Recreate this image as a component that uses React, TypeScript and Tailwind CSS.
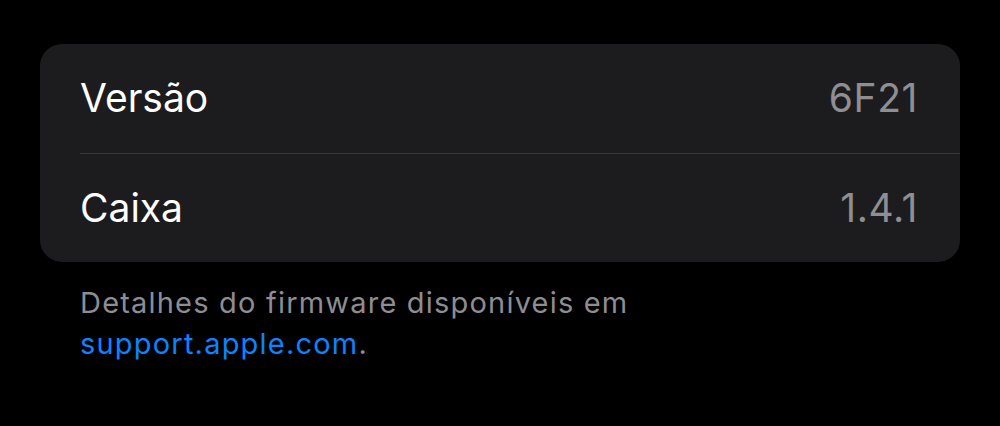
export default function App() {
  return (
    <div className="w-[1000px] h-[426px] bg-black pt-[44px] px-[40px] font-['Inter','Noto_Sans',sans-serif] antialiased">
      <div className="rounded-[22px] bg-[#1c1c1e] overflow-hidden">
        <div className="flex items-center justify-between h-[109px] pl-[40px] pr-[42px]">
          <span className="text-[39px] text-white">Versão</span>
          <span className="text-[39px] text-[#8e8e93] tracking-[0.6px]">6F21</span>
        </div>
        <div className="ml-[40px] h-px bg-[#38383a]" />
        <div className="flex items-center justify-between h-[108px] pl-[40px] pr-[42px]">
          <span className="text-[39px] text-white">Caixa</span>
          <span className="text-[39px] text-[#8e8e93] tracking-[0.6px]">1.4.1</span>
        </div>
      </div>
      <p className="mt-[20px] pl-[40px] text-[29px] leading-[41px] tracking-[1.2px] text-[#8d8d93]">
        Detalhes do firmware disponíveis em
        <br />
        <span className="text-[#0a84ff]">support.apple.com</span>.
      </p>
    </div>
  );
}
